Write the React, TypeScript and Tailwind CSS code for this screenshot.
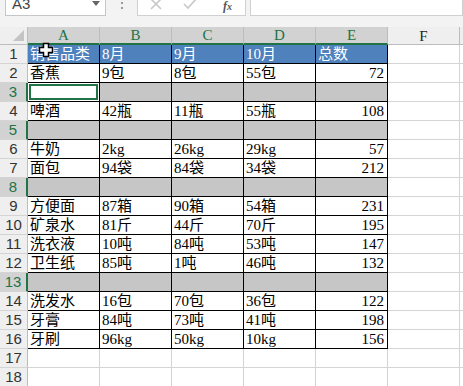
import React from "react";

type Row = { n: number; cells?: string[]; gray?: boolean };

const rows: Row[] = [
  { n: 1, cells: ["销售品类", "8月", "9月", "10月", "总数"] },
  { n: 2, cells: ["香蕉", "9包", "8包", "55包", "72"] },
  { n: 3, gray: true },
  { n: 4, cells: ["啤酒", "42瓶", "11瓶", "55瓶", "108"] },
  { n: 5, gray: true },
  { n: 6, cells: ["牛奶", "2kg", "26kg", "29kg", "57"] },
  { n: 7, cells: ["面包", "94袋", "84袋", "34袋", "212"] },
  { n: 8, gray: true },
  { n: 9, cells: ["方便面", "87箱", "90箱", "54箱", "231"] },
  { n: 10, cells: ["矿泉水", "81斤", "44斤", "70斤", "195"] },
  { n: 11, cells: ["洗衣液", "10吨", "84吨", "53吨", "147"] },
  { n: 12, cells: ["卫生纸", "85吨", "1吨", "46吨", "132"] },
  { n: 13, gray: true },
  { n: 14, cells: ["洗发水", "16包", "70包", "36包", "122"] },
  { n: 15, cells: ["牙膏", "84吨", "73吨", "41吨", "198"] },
  { n: 16, cells: ["牙刷", "96kg", "50kg", "10kg", "156"] },
  { n: 17 },
  { n: 18 },
];

const cols = ["A", "B", "C", "D", "E"];
const cellFont = "font-['Liberation_Serif','Noto_Sans_CJK_SC',serif]";

function DataRow({ row }: { row: Row }) {
  const inTable = row.n <= 16;
  const header = row.n === 1;
  return (
    <div className="flex h-[19px]">
      <div
        className={`w-[28px] shrink-0 h-[19px] flex items-center justify-center border-b border-[#d4d4d4] text-[15px] font-['Liberation_Sans',sans-serif] ${
          row.gray
            ? "bg-[#d2d2d2] text-[#217346] border-r-2 border-r-[#217346]"
            : "bg-[#efefef] text-[#333] border-r border-r-[#bdbdbd]"
        }`}
      >
        {row.n}
      </div>
      {cols.map((c, i) => {
        const active = row.n === 3 && i === 0;
        let bg = "bg-white";
        if (header) bg = "bg-[#4f81bd] text-white";
        else if (row.gray && !active) bg = "bg-[#c6c6c6]";
        return (
          <div
            key={c}
            className={`relative w-[72px] shrink-0 h-[19px] border-r border-b overflow-hidden whitespace-nowrap text-[15px] leading-[18px] px-[2px] ${cellFont} ${
              inTable ? "border-black" : "border-[#d4d4d4]"
            } ${bg} ${i === 4 && !header ? "text-right pr-[3px]" : ""}`}
          >
            {active && <div className="absolute inset-[1px] border-2 border-[#217346]" />}
            {row.cells?.[i]}
          </div>
        );
      })}
      <div className="w-[72px] shrink-0 h-[19px] border-r border-b border-[#d4d4d4] bg-white" />
      <div className="w-[10px] shrink-0 h-[19px] border-b border-[#d4d4d4] bg-white" />
    </div>
  );
}

export default function App() {
  return (
    <div className="relative w-[463px] h-[386px] overflow-hidden bg-white">
      {/* formula bar */}
      <div className="h-[27px] bg-[#f3f3f3] flex items-start overflow-hidden">
        <div className="ml-[5px] -mt-[8px] w-[101px] h-[24px] bg-white border border-[#c6c6c6] flex items-center justify-between pl-[6px] pr-[4px] shrink-0">
          <span className="text-[15px] leading-[24px] text-[#444] font-['Liberation_Sans',sans-serif]">A3</span>
          <svg width="10" height="8" viewBox="0 0 10 8">
            <path d="M1 1 L9 1 L5 6 Z" fill="#666" />
          </svg>
        </div>
        <div className="w-[31px] h-[16px] flex flex-col items-center justify-start gap-[3px] pt-[2px] shrink-0">
          <div className="w-[2px] h-[2px] bg-[#999]" />
          <div className="w-[2px] h-[2px] bg-[#999]" />
        </div>
        <div className="-mt-[8px] w-[109px] h-[24px] bg-white border border-[#d0d0d0] flex items-center shrink-0 relative">
          <svg className="absolute left-[12px] top-[5px]" width="12" height="12" viewBox="0 0 12 12">
            <path d="M1 1 L11 11 M11 1 L1 11" stroke="#c8c8c8" strokeWidth="1.6" />
          </svg>
          <svg className="absolute left-[45px] top-[5px]" width="14" height="12" viewBox="0 0 14 12">
            <path d="M1 6 L5 10 L13 1" stroke="#c8c8c8" strokeWidth="1.6" fill="none" />
          </svg>
          <span className="absolute left-[85px] top-[6px] text-[12px] italic font-bold text-[#555] font-['Liberation_Serif',serif] leading-[14px]">
            f<span className="text-[10px]">x</span>
          </span>
        </div>
        <div className="ml-[4px] -mt-[8px] flex-1 h-[24px] bg-white border border-[#d0d0d0]" />
      </div>

      {/* column headers */}
      <div className="flex h-[18px]">
        <div className="w-[28px] shrink-0 h-[18px] bg-[#efefef] border-r border-b border-[#bdbdbd] relative">
          <svg className="absolute right-[3px] bottom-[3px]" width="11" height="11" viewBox="0 0 11 11">
            <path d="M11 0 L11 11 L0 11 Z" fill="#c4c4c4" />
          </svg>
        </div>
        {cols.map((c) => (
          <div
            key={c}
            className="w-[72px] shrink-0 h-[18px] bg-[#d2d2d2] border-r border-r-[#bdbdbd] border-b-2 border-b-[#217346] flex items-center justify-center text-[15px] text-[#217346] font-['Liberation_Serif',serif] leading-[16px]"
          >
            {c}
          </div>
        ))}
        <div className="w-[72px] shrink-0 h-[18px] bg-[#efefef] border-r border-b border-[#bdbdbd] flex items-center justify-center text-[15px] text-[#222] font-['Liberation_Serif',serif] leading-[16px]">
          F
        </div>
        <div className="w-[10px] shrink-0 h-[18px] bg-[#efefef] border-b border-[#bdbdbd]" />
      </div>

      {rows.map((r) => (
        <DataRow key={r.n} row={r} />
      ))}

      {/* mouse cursor */}
      <svg className="absolute left-[38px] top-[42px]" width="16" height="16" viewBox="0 0 16 16">
        <path
          d="M5.5 1.5 H10.5 V5.5 H14.5 V10.5 H10.5 V14.5 H5.5 V10.5 H1.5 V5.5 H5.5 Z"
          fill="white"
          stroke="black"
          strokeWidth="1.5"
        />
      </svg>
    </div>
  );
}
